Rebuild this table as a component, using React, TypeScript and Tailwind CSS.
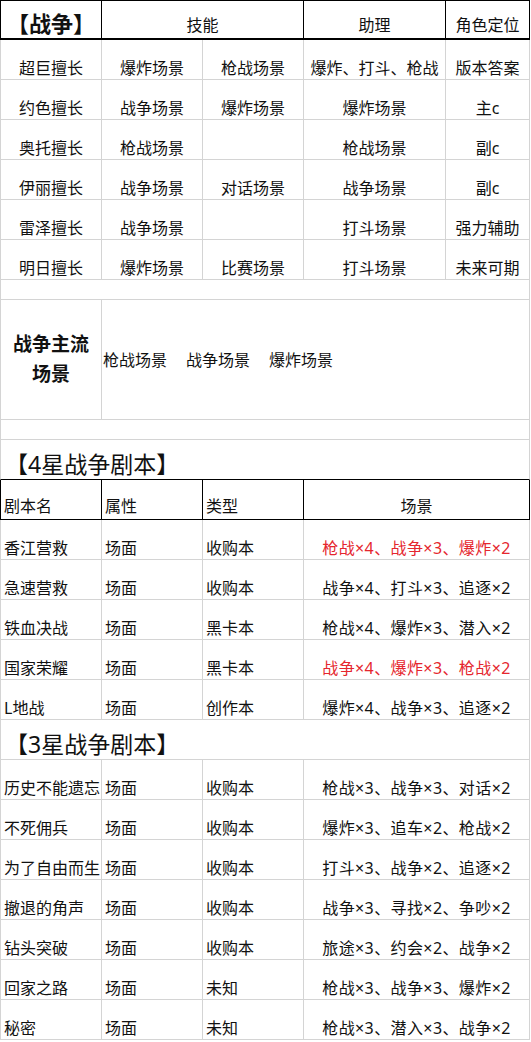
const font = { fontFamily: '"Noto Sans", "Noto Sans CJK SC", "Microsoft YaHei", sans-serif' };

const topRows = [
  ["超巨擅长", "爆炸场景", "枪战场景", "爆炸、打斗、枪战", "版本答案"],
  ["约色擅长", "战争场景", "爆炸场景", "爆炸场景", "主c"],
  ["奥托擅长", "枪战场景", "", "枪战场景", "副c"],
  ["伊丽擅长", "战争场景", "对话场景", "战争场景", "副c"],
  ["雷泽擅长", "战争场景", "", "打斗场景", "强力辅助"],
  ["明日擅长", "爆炸场景", "比赛场景", "打斗场景", "未来可期"],
];

const fourStar: [string, string, string, string, boolean][] = [
  ["香江营救", "场面", "收购本", "枪战×4、战争×3、爆炸×2", true],
  ["急速营救", "场面", "收购本", "战争×4、打斗×3、追逐×2", false],
  ["铁血决战", "场面", "黑卡本", "枪战×4、爆炸×3、潜入×2", false],
  ["国家荣耀", "场面", "黑卡本", "战争×4、爆炸×3、枪战×2", true],
  ["L地战", "场面", "创作本", "爆炸×4、战争×3、追逐×2", false],
];

const threeStar = [
  ["历史不能遗忘", "场面", "收购本", "枪战×3、战争×3、对话×2"],
  ["不死佣兵", "场面", "收购本", "爆炸×3、追车×2、枪战×2"],
  ["为了自由而生", "场面", "收购本", "打斗×3、战争×2、追逐×2"],
  ["撤退的角声", "场面", "收购本", "战争×3、寻找×2、争吵×2"],
  ["钻头突破", "场面", "收购本", "旅途×3、约会×2、战争×2"],
  ["回家之路", "场面", "未知", "枪战×3、战争×3、爆炸×2"],
  ["秘密", "场面", "未知", "枪战×3、潜入×3、战争×2"],
];

const topW = ["w-[102px] border-l", "w-[101px]", "w-[101px]", "w-[142px]", "w-[84px]"];
const playW = ["w-[102px] border-l", "w-[101px]", "w-[101px]", "w-[226px]"];

function ScriptRow({ cells, red }: { cells: string[]; red?: boolean }) {
  return (
    <div className="flex h-10 border-b border-[#d4d4d4]">
      {cells.map((c, i) => (
        <div
          key={i}
          className={`${playW[i]} flex items-end border-r border-[#d4d4d4] pb-[1px] whitespace-nowrap ${
            i === 3 ? "justify-center tracking-[0.4px]" : "pl-[3px]"
          } ${i === 3 && red ? "text-[#e5262e]" : ""}`}
        >
          {c}
        </div>
      ))}
    </div>
  );
}

function TitleRow({ text, dark }: { text: string; dark?: boolean }) {
  return (
    <div
      className={`flex h-10 items-end border-x border-b border-[#d4d4d4] pb-[1px] pl-[4px] text-[23px] leading-7 ${
        dark ? "border-b-black" : ""
      }`}
    >
      {text}
    </div>
  );
}

export default function App() {
  return (
    <div className="w-[530px] bg-white text-[16px] leading-5 text-[#111]" style={font}>
      {/* top table header */}
      <div className="flex h-10 border-t border-b-2 border-black">
        <div className="w-[102px] border-x border-black flex items-end justify-center pb-[1px] text-[22px] font-bold leading-7">
          【战争】
        </div>
        <div className="w-[202px] border-r border-black flex items-end justify-center pb-[3px]">技能</div>
        <div className="w-[142px] border-r border-black flex items-end justify-center pb-[3px]">助理</div>
        <div className="w-[84px] border-r border-black flex items-end justify-center pb-[3px]">角色定位</div>
      </div>

      {topRows.map((r, ri) => (
        <div key={ri} className="flex h-10 border-b border-[#d4d4d4]">
          {r.map((c, i) => (
            <div key={i} className={`${topW[i]} flex items-end justify-center border-r border-[#d4d4d4] pb-[1px] whitespace-nowrap`}>
              {c}
            </div>
          ))}
        </div>
      ))}

      <div className="h-5 border-x border-b border-[#d4d4d4]" />

      <div className="flex h-[120px] border-b border-[#d4d4d4]">
        <div className="w-[102px] border-x border-[#d4d4d4] flex items-center justify-center text-center text-[19px] font-bold leading-[30px] pb-[2px]">
          战争主流
          <br />
          场景
        </div>
        <div className="flex-1 border-r border-[#d4d4d4] flex items-center gap-[19px] pl-[1px] pt-[1px]">
          <span>枪战场景</span>
          <span>战争场景</span>
          <span>爆炸场景</span>
        </div>
      </div>

      <div className="h-5 border-x border-b border-[#d4d4d4]" />

      <TitleRow text="【4星战争剧本】" dark />

      <div className="flex h-10 border-b border-black">
        {["剧本名", "属性", "类型", "场景"].map((c, i) => (
          <div
            key={i}
            className={`${playW[i]} flex items-end border-r border-black pb-[3px] ${i === 3 ? "justify-center" : "pl-[3px]"}`}
          >
            {c}
          </div>
        ))}
      </div>

      {fourStar.map((r, i) => (
        <ScriptRow key={i} cells={r.slice(0, 4) as string[]} red={r[4]} />
      ))}

      <TitleRow text="【3星战争剧本】" />

      {threeStar.map((r, i) => (
        <ScriptRow key={i} cells={r} />
      ))}
    </div>
  );
}
